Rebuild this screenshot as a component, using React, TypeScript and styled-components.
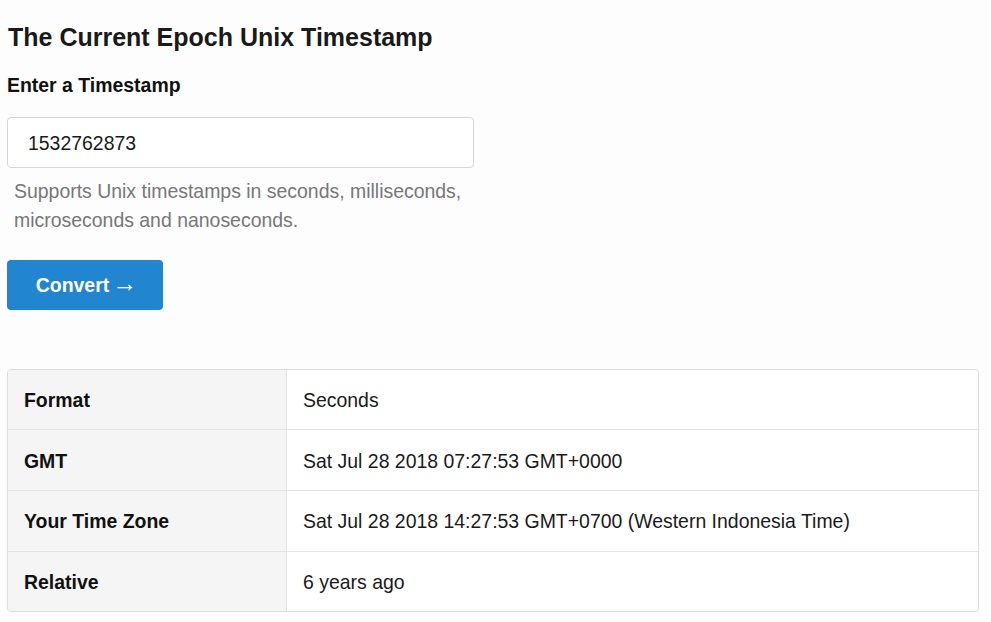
import React from "react";
import styled, { createGlobalStyle } from "styled-components";

const GlobalStyle = createGlobalStyle`
  html, body {
    margin: 0;
    padding: 0;
    background: #fdfdfd;
  }
  body {
    font-family: "Liberation Sans", Arial, sans-serif;
    font-size: 19.45px;
    line-height: 28.8px;
    color: #1a1a1a;
  }
  * { box-sizing: border-box; }
`;

const Page = styled.main`
  display: flex;
  flex-direction: column;
  align-items: flex-start;
  padding: 22px 12px 0 7px;
  width: 991px;
`;

const Title = styled.h1`
  margin: 0;
  font-size: 25px;
  line-height: 30px;
  font-weight: 700;
  color: #1a1a1a;
  padding-left: 1px;
`;

const Label = styled.label`
  display: block;
  margin-top: 19px;
  font-size: 19.45px;
  line-height: 28.8px;
  font-weight: 700;
  color: #111;
`;

const Input = styled.input`
  margin-top: 17.2px;
  width: 467px;
  height: 51px;
  padding: 3px 20px 0;
  border: 1px solid #d6d6d6;
  border-radius: 4px;
  background: #fff;
  font-family: "Liberation Sans", Arial, sans-serif;
  font-size: 19.45px;
  color: #1a1a1a;
  outline: none;
`;

const Help = styled.p`
  margin: 9.4px 0 0;
  padding-left: 7px;
  width: 467px;
  font-size: 19.45px;
  line-height: 28.8px;
  color: #777;
`;

const Button = styled.button`
  display: flex;
  align-items: center;
  justify-content: center;
  gap: 3px;
  margin-top: 25px;
  width: 156px;
  height: 50px;
  border: none;
  border-radius: 4px;
  background: #2185d0;
  color: #fff;
  font-family: "Liberation Sans", Arial, sans-serif;
  font-size: 19.45px;
  font-weight: 700;
  cursor: pointer;
  padding: 1px 0 0 3px;
`;

const Arrow = styled.span`
  font-family: "Liberation Sans", Arial, sans-serif;
  font-weight: 400;
  font-size: 25px;
  line-height: 1;
  margin-top: -3px;
`;

const Table = styled.table`
  margin-top: 59px;
  width: 972px;
  border-collapse: separate;
  border-spacing: 0;
  border: 1px solid #ddd;
  border-radius: 4px;
  overflow: hidden;
  background: #fff;
`;

const Row = styled.tr<{ $last?: boolean }>`
  & > td {
    border-bottom: ${(p) => (p.$last ? "none" : "1px solid #e3e3e3")};
  }
`;

const KeyCell = styled.td`
  width: 279px;
  padding: 16.36px 16px 14.36px;
  background: #f5f5f5;
  border-right: 1px solid #e3e3e3;
  font-weight: 700;
  line-height: 28.8px;
  color: #111;
`;

const ValueCell = styled.td`
  padding: 16.36px 16px 14.36px;
  line-height: 28.8px;
  color: #1a1a1a;
  background: #fff;
`;

const rows: [string, string][] = [
  ["Format", "Seconds"],
  ["GMT", "Sat Jul 28 2018 07:27:53 GMT+0000"],
  ["Your Time Zone", "Sat Jul 28 2018 14:27:53 GMT+0700 (Western Indonesia Time)"],
  ["Relative", "6 years ago"],
];

export default function App() {
  return (
    <>
      <GlobalStyle />
      <Page>
        <Title>The Current Epoch Unix Timestamp</Title>
        <Label htmlFor="ts">Enter a Timestamp</Label>
        <Input id="ts" defaultValue="1532762873" />
        <Help>Supports Unix timestamps in seconds, milliseconds, microseconds and nanoseconds.</Help>
        <Button>
          <span>Convert</span>
          <Arrow>→</Arrow>
        </Button>
        <Table>
          <tbody>
            {rows.map(([k, v], i) => (
              <Row key={k} $last={i === rows.length - 1}>
                <KeyCell>{k}</KeyCell>
                <ValueCell>{v}</ValueCell>
              </Row>
            ))}
          </tbody>
        </Table>
      </Page>
    </>
  );
}
